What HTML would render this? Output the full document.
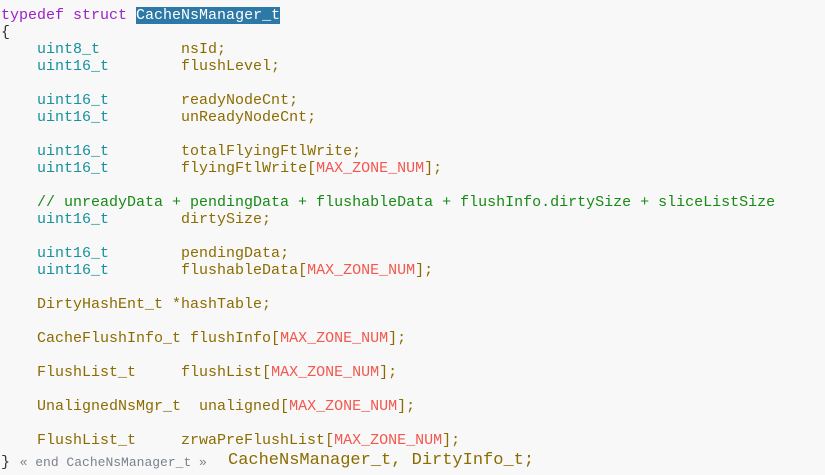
<!DOCTYPE html>
<html><head><style>
body{margin:0;background:#f8f8f8;width:825px;height:475px;overflow:hidden}
pre{margin:0;position:absolute;left:1px;top:7px;font-family:"Liberation Mono",monospace;font-size:15px;line-height:17px;color:#333}
.k{color:#9b22c4}.t{color:#16919e}.v{color:#8c6c00}.r{color:#f2584e}.c{color:#178a16}
.h{background:#2c79a8;color:#fff}
.last{position:absolute;left:1px;top:453px;font-family:"Liberation Mono",monospace;white-space:pre}
.g{color:#7a8290;font-size:13px}
.big{position:absolute;left:227px;top:-2px;font-size:17px;color:#8c6c00}
</style></head><body>
<pre><span class="k">typedef struct</span> <span class="h">CacheNsManager_t</span>
{
    <span class="t">uint8_t</span>         <span class="v">nsId;</span>
    <span class="t">uint16_t</span>        <span class="v">flushLevel;</span>

    <span class="t">uint16_t</span>        <span class="v">readyNodeCnt;</span>
    <span class="t">uint16_t</span>        <span class="v">unReadyNodeCnt;</span>

    <span class="t">uint16_t</span>        <span class="v">totalFlyingFtlWrite;</span>
    <span class="t">uint16_t</span>        <span class="v">flyingFtlWrite[</span><span class="r">MAX_ZONE_NUM</span><span class="v">];</span>

    <span class="c">// unreadyData + pendingData + flushableData + flushInfo.dirtySize + sliceListSize</span>
    <span class="t">uint16_t</span>        <span class="v">dirtySize;</span>

    <span class="t">uint16_t</span>        <span class="v">pendingData;</span>
    <span class="t">uint16_t</span>        <span class="v">flushableData[</span><span class="r">MAX_ZONE_NUM</span><span class="v">];</span>

    <span class="v">DirtyHashEnt_t *hashTable;</span>

    <span class="v">CacheFlushInfo_t flushInfo[</span><span class="r">MAX_ZONE_NUM</span><span class="v">];</span>

    <span class="v">FlushList_t     flushList[</span><span class="r">MAX_ZONE_NUM</span><span class="v">];</span>

    <span class="v">UnalignedNsMgr_t  unaligned[</span><span class="r">MAX_ZONE_NUM</span><span class="v">];</span>

    <span class="v">FlushList_t     zrwaPreFlushList[</span><span class="r">MAX_ZONE_NUM</span><span class="v">];</span>
</pre>
<div class="last"><span style="font-size:15px;color:#333">}</span> <span class="g">« end CacheNsManager_t »</span><span class="big">CacheNsManager_t, DirtyInfo_t;</span></div>
</body></html>
